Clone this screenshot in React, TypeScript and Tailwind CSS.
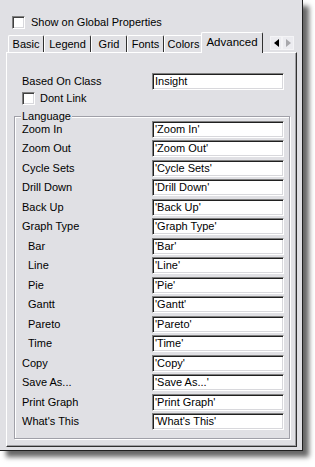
import React from 'react';

const Checkbox = () => (
  <div className="w-[13px] h-[13px] shrink-0 bg-white border border-[#808080] border-b-white border-r-white shadow-[inset_1px_1px_0_#404040,inset_-1px_-1px_0_#d8d8dc]" />
);

const Input = ({ value }: { value: string }) => (
  <div className="w-[132px] h-[17px] shrink-0 bg-white border border-[#808080] border-b-white border-r-white shadow-[inset_1px_1px_0_#202020,inset_-1px_-1px_0_#d8d8dc] flex items-center pl-[2px] whitespace-nowrap overflow-hidden">
    {value}
  </div>
);

const rows: [string, string, boolean][] = [
  ['Zoom In', "'Zoom In'", false],
  ['Zoom Out', "'Zoom Out'", false],
  ['Cycle Sets', "'Cycle Sets'", false],
  ['Drill Down', "'Drill Down'", false],
  ['Back Up', "'Back Up'", false],
  ['Graph Type', "'Graph Type'", false],
  ['Bar', "'Bar'", true],
  ['Line', "'Line'", true],
  ['Pie', "'Pie'", true],
  ['Gantt', "'Gantt'", true],
  ['Pareto', "'Pareto'", true],
  ['Time', "'Time'", true],
  ['Copy', "'Copy'", false],
  ['Save As...', "'Save As...'", false],
  ['Print Graph', "'Print Graph'", false],
  ["What's This", "'What's This'", false],
];

const tabs: [string, string][] = [
  ['Basic', 'w-[36px]'],
  ['Legend', 'w-[47px]'],
  ['Grid', 'w-[36px]'],
  ['Fonts', 'w-[37px]'],
  ['Colors', 'w-[39px]'],
];

export default function App() {
  return (
    <div className="w-[315px] h-[467px] bg-white font-['Liberation_Sans',Arial,sans-serif] text-[11px] leading-none text-black">
      <div className="w-[303px] h-[451px] bg-[#e0e0e4] border-r border-b border-[#202020] shadow-[6px_6px_5px_rgba(0,0,0,0.6)] flex flex-col">
        <div className="flex items-center pl-[12px] pt-[16px] h-[29px]">
          <Checkbox />
          <span className="ml-[6px]">Show on Global Properties</span>
        </div>
        <div className="flex items-end h-[17px] mt-[6px] pl-[8px] relative z-10">
          {tabs.map(([t, w]) => (
            <div
              key={t}
              className={`${w} h-[17px] shrink-0 border-l border-t border-white border-r border-r-[#303030] rounded-t-[2px] flex items-center justify-center`}
            >
              {t}
            </div>
          ))}
          <div className="w-[62px] h-[21px] -mx-[2px] -mb-[1px] relative z-10 shrink-0 bg-[#e0e0e4] border-l border-t border-white border-r border-r-[#303030] rounded-t-[2px] flex items-center justify-center pb-[1px] text-[11.5px]">
            Advanced
          </div>
          <div className="self-start mt-[1px] ml-[9px] flex">
            <div className="w-[12px] h-[14px] bg-[#ececf0] border border-[#f4f4f6] flex items-center justify-center">
              <div className="w-0 h-0 border-y-[4px] border-y-transparent border-r-[5px] border-r-black" />
            </div>
            <div className="w-[12px] h-[14px] bg-[#ececf0] border border-[#f4f4f6] flex items-center justify-center">
              <div className="w-0 h-0 border-y-[4px] border-y-transparent border-l-[5px] border-l-[#a8a8ac]" />
            </div>
          </div>
        </div>
        <div className="ml-[6px] w-[291px] h-[395px] border-l border-t border-white border-r border-b border-r-[#303030] border-b-[#303030] shadow-[inset_-1px_-1px_0_#a0a0a4] pl-[15px] pt-[20px] flex flex-col">
          <div className="flex items-center h-[17px]">
            <span className="w-[130px] shrink-0">Based On Class</span>
            <Input value="Insight" />
          </div>
          <div className="flex items-center mt-[2px] h-[13px]">
            <Checkbox />
            <span className="ml-[5px]">Dont Link</span>
          </div>
          <div className="relative mt-[11px] -ml-[8px] w-[276px] h-[323px] border border-[#a0a0a8] shadow-[inset_1px_1px_0_#fff,1px_1px_0_#fff] pl-[7px] pt-[2.5px] flex flex-col">
            <span className="absolute -top-[6px] left-[6px] px-[1px] bg-[#e0e0e4]">Language</span>
            {rows.map(([label, value, indent]) => (
              <div key={label} className="flex items-center h-[19.5px] shrink-0">
                <span className={`w-[130px] shrink-0 ${indent ? 'pl-[6px]' : ''}`}>{label}</span>
                <Input value={value} />
              </div>
            ))}
          </div>
        </div>
      </div>
    </div>
  );
}
